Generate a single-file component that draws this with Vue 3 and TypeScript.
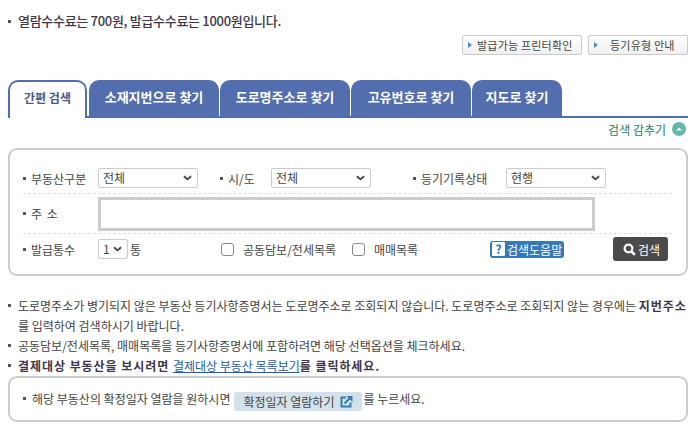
<template>
  <div class="page">
    <p class="fee"><span class="dot" />열람수수료는 700원, 발급수수료는 1000원입니다.</p>

    <div class="guide-btns">
      <button type="button" class="guide wide"><i class="arr" />발급가능 프린터확인</button>
      <button type="button" class="guide narrow"><i class="arr" /><span class="guide-txt">등기유형 안내</span></button>
    </div>

    <div class="tabs">
      <a
        v-for="tab in tabs"
        :key="tab.label"
        :class="['tab', { active: tab.active }]"
        :style="{ width: tab.width + 'px' }"
      >{{ tab.label }}</a>
    </div>

    <div class="toggle">
      <span>검색 감추기</span>
      <svg width="14" height="14" viewBox="0 0 14 14">
        <circle cx="7" cy="7" r="7" fill="#64b8a9" />
        <path d="M4 8.5 7 5.5l3 3z" fill="#fff" />
      </svg>
    </div>

    <div class="search-box">
      <div class="row row-top">
        <span class="lbl lbl-a"><span class="sq" />부동산구분</span>
        <div class="sel sel-a">전체<svg class="chev" viewBox="0 0 10 6"><path d="M1 1l4 3.5L9 1" /></svg></div>
        <span class="lbl lbl-b"><span class="sq" />시/도</span>
        <div class="sel sel-b">전체<svg class="chev" viewBox="0 0 10 6"><path d="M1 1l4 3.5L9 1" /></svg></div>
        <span class="lbl lbl-c"><span class="sq" />등기기록상태</span>
        <div class="sel sel-c">현행<svg class="chev" viewBox="0 0 10 6"><path d="M1 1l4 3.5L9 1" /></svg></div>
      </div>
      <div class="row row-addr">
        <span class="lbl lbl-a"><span class="sq" /><span class="addr-lbl">주 소</span></span>
        <div class="addr" />
      </div>
      <div class="row row-bottom">
        <span class="lbl lbl-a"><span class="sq" />발급통수</span>
        <div class="sel sel-n">1<svg class="chev" viewBox="0 0 10 6"><path d="M1 1l4 3.5L9 1" /></svg></div>
        <span class="unit">통</span>
        <label class="chk chk-a"><i class="box" />공동담보/전세목록</label>
        <label class="chk chk-b"><i class="box" />매매목록</label>
        <a class="help"><b class="q">?</b>검색도움말</a>
        <button type="button" class="go">
          <svg width="13" height="13" viewBox="0 0 13 13">
            <circle cx="5.5" cy="5.5" r="3.9" fill="none" stroke="#fff" stroke-width="2.2" />
            <path d="M8.3 8.3l3.6 3.6" stroke="#fff" stroke-width="2.6" />
          </svg>검색
        </button>
      </div>
    </div>

    <ul class="notes">
      <li>도로명주소가 병기되지 않은 부동산 등기사항증명서는 도로명주소로 조회되지 않습니다. 도로명주소로 조회되지 않는 경우에는 <strong>지번주소</strong><br />를 입력하여 검색하시기 바랍니다.</li>
      <li>공동담보/전세목록, 매매목록을 등기사항증명서에 포함하려면 해당 선택옵션을 체크하세요.</li>
      <li class="em">결제대상 부동산을 보시려면 <a>결제대상 부동산 목록보기</a>를 클릭하세요.</li>
    </ul>

    <div class="confirm">
      <span class="sq" />해당 부동산의 확정일자 열람을 원하시면
      <span class="confirm-btn">확정일자 열람하기
        <svg width="13" height="13" viewBox="0 0 13 13" fill="none" stroke="#2f7cb0" stroke-width="2">
          <path d="M6 2.5H1.5v9h9V7.5" />
          <path d="M4.5 8.5 10 3" />
          <path d="M6.5 1h6v6z" fill="#2f7cb0" stroke="none" />
        </svg>
      </span>
      <span class="confirm-end">를 누르세요.</span>
    </div>
  </div>
</template>

<script setup lang="ts">
interface Tab {
  label: string;
  width: number;
  active?: boolean;
}

const tabs: Tab[] = [
  { label: "간편 검색", width: 79, active: true },
  { label: "소재지번으로 찾기", width: 130 },
  { label: "도로명주소로 찾기", width: 130 },
  { label: "고유번호로 찾기", width: 120 },
  { label: "지도로 찾기", width: 90 },
];
</script>

<style>
html,
body {
  margin: 0;
  background: #fff;
}
</style>

<style scoped>
.page {
  width: 680px;
  height: 428px;
  padding: 0 0 0 8px;
  box-sizing: content-box;
  font-family: "Noto Sans CJK KR", "Liberation Sans", sans-serif;
  font-size: 12px;
  color: #333;
  overflow: hidden;
}
.fee {
  margin: 0;
  padding-top: 13px;
  height: 22px;
  line-height: 16px;
  font-size: 13px;
  letter-spacing: -0.3px;
  color: #3f3548;
  font-weight: 500;
  box-sizing: content-box;
}
.dot {
  display: inline-block;
  width: 3px;
  height: 3px;
  background: #555;
  margin-right: 7px;
  vertical-align: 3px;
}
.guide-btns {
  display: flex;
  justify-content: flex-end;
  gap: 6px;
  height: 20px;
}
.guide {
  display: flex;
  align-items: center;
  height: 20px;
  padding: 0 0 0 5px;
  border: 1px solid #ccc;
  border-radius: 2px;
  background: linear-gradient(#fff, #f0f0f0);
  font: 11px "Noto Sans CJK KR", sans-serif;
  letter-spacing: 0.2px;
  color: #444;
  box-sizing: border-box;
  white-space: nowrap;
}
.wide {
  width: 120px;
}
.narrow {
  width: 100px;
}
.guide-txt {
  margin-left: 7px;
}
.arr {
  width: 0;
  height: 0;
  border-left: 4px solid #4a90c8;
  border-top: 3px solid transparent;
  border-bottom: 3px solid transparent;
  margin-right: 5px;
}
.tabs {
  display: flex;
  gap: 1px;
  margin-top: 25px;
  height: 38px;
  box-sizing: border-box;
  border-bottom: 2px solid #526eae;
}
.tab {
  display: flex;
  align-items: center;
  justify-content: center;
  height: 36px;
  padding-bottom: 3px;
  background: #526eae;
  color: #fff;
  font-weight: 700;
  font-size: 13px;
  border-radius: 10px 10px 0 0;
  box-sizing: border-box;
}
.tab.active {
  height: 38px;
  margin-right: 1px;
  padding-bottom: 5px;
  background: #fff;
  color: #4c5a88;
  font-size: 12px;
  border: 2px solid #526eae;
  border-bottom: 0;
}
.toggle {
  display: flex;
  justify-content: flex-end;
  align-items: center;
  gap: 6px;
  height: 22px;
  padding-right: 2px;
  font-size: 12px;
  color: #2f7a66;
}
.search-box {
  margin-top: 8px;
  height: 128px;
  box-sizing: border-box;
  border: 2px solid #ccc;
  border-radius: 9px;
  padding: 17px 14px 0 13px;
}
.row {
  display: flex;
  align-items: center;
  border-bottom: 1px dashed #ddd;
  color: #444;
}
.row-top {
  height: 22px;
  padding-bottom: 4px;
}
.row-addr {
  height: 39px;
}
.row-bottom {
  height: 30px;
  border-bottom: 0;
}
.lbl {
  display: flex;
  align-items: center;
  flex: none;
}
.sq {
  display: inline-block;
  width: 3px;
  height: 3px;
  background: #555;
  margin-right: 5px;
  vertical-align: 3px;
  flex: none;
}
.lbl-a {
  width: 75px;
}
.lbl-b {
  width: 51px;
  margin-left: 22px;
}
.lbl-c {
  width: 93px;
  margin-left: 42px;
}
.addr-lbl {
  letter-spacing: 1px;
}
.sel {
  position: relative;
  height: 20px;
  line-height: 18px;
  padding-left: 4px;
  border: 1px solid #ccc;
  border-radius: 2px;
  box-sizing: border-box;
  flex: none;
  background: #fff;
}
.sel-a {
  width: 100px;
}
.sel-b {
  width: 100px;
}
.sel-c {
  width: 100px;
}
.sel-n {
  width: 30px;
}
.chev {
  position: absolute;
  right: 5px;
  top: 6px;
  width: 9px;
  height: 6px;
  fill: none;
  stroke: #444;
  stroke-width: 2;
}
.addr {
  width: 497px;
  height: 34px;
  border: 3px solid #ccc;
  box-sizing: border-box;
  flex: none;
}
.unit {
  margin-left: 2px;
  width: 91px;
  flex: none;
}
.chk {
  display: flex;
  align-items: center;
  flex: none;
}
.box {
  width: 13px;
  height: 13px;
  border: 1px solid #888;
  border-radius: 3px;
  margin-right: 9px;
  box-sizing: border-box;
}
.chk-a {
  width: 131px;
}
.chk-b {
  width: 138px;
}
.help {
  display: flex;
  align-items: center;
  height: 17px;
  width: 74px;
  background: #337ab7;
  color: #fff;
  border-radius: 3px;
  padding-left: 2px;
  box-sizing: border-box;
  flex: none;
  white-space: nowrap;
}
.q {
  width: 13px;
  height: 14px;
  line-height: 14px;
  text-align: center;
  background: #fff;
  color: #2a6ea8;
  margin-right: 2px;
  font-size: 12px;
  border-radius: 1px;
  flex: none;
}
.go {
  display: flex;
  align-items: center;
  justify-content: center;
  gap: 2px;
  margin-left: 49px;
  width: 55px;
  height: 24px;
  border: 0;
  border-radius: 3px;
  background: #4a4a4a;
  color: #fff;
  font: 12px "Noto Sans CJK KR", sans-serif;
  padding: 0 0 0 2px;
  flex: none;
}
.notes {
  list-style: none;
  margin: 20px 0 0;
  padding: 0;
  color: #3f3f3f;
  font-size: 12px;
  line-height: 20px;
}
.notes li {
  position: relative;
  padding-left: 10px;
  white-space: nowrap;
}
.notes li::before {
  content: "";
  position: absolute;
  left: 0;
  top: 8px;
  width: 3px;
  height: 3px;
  background: #555;
}
.notes strong {
  color: #3f3548;
  letter-spacing: 1px;
}
.em {
  font-weight: 700;
  color: #3f3548;
  letter-spacing: 0.95px;
}
.em a {
  color: #1a5ea8;
  text-decoration: underline;
  font-weight: 400;
  letter-spacing: 0;
}
.confirm {
  display: flex;
  align-items: center;
  gap: 4px;
  height: 46px;
  padding: 0 0 2px 13px;
  box-sizing: border-box;
  border: 2px solid #ccc;
  border-radius: 9px;
  color: #444;
  white-space: nowrap;
}
.confirm .sq {
  margin-right: 2px;
}
.confirm-btn {
  display: flex;
  align-items: center;
  gap: 6px;
  height: 19px;
  width: 128px;
  margin-top: 6px;
  justify-content: center;
  background: #d3e2ea;
  border-radius: 3px;
}
.confirm-end {
  margin-left: -3px;
}
</style>
